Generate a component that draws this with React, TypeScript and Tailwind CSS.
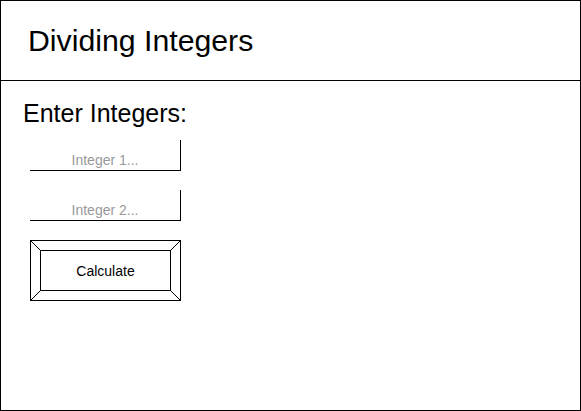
export default function App() {
  const fields = ['Integer 1...', 'Integer 2...']

  return (
    <div
      className="w-[581px] h-[411px] border border-black bg-white flex flex-col"
      style={{ fontFamily: '"Liberation Sans", Arial, sans-serif' }}
    >
      {/* header */}
      <div className="h-[80px] shrink-0 border-b border-black flex items-center pl-[27px]">
        <h1 className="text-[30.25px] leading-[34px] text-black">Dividing Integers</h1>
      </div>

      <div className="flex flex-col pt-[18px] pl-[22px]">
        <h2 className="text-[25px] leading-[28px] text-black">Enter Integers:</h2>

        <div className="flex flex-col gap-[19px] mt-[13px] ml-[7px]">
          {fields.map((f) => (
            <input
              key={f}
              placeholder={f}
              className="w-[151px] h-[31px] border-r border-b border-black pt-[9px] text-center text-[14px] leading-[16px] text-black placeholder:text-[#999999] outline-none bg-transparent"
            />
          ))}
        </div>

        {/* bevelled button */}
        <button className="relative mt-[19px] ml-[7px] w-[151px] h-[61px] border border-black p-[9px] cursor-pointer">
          <div className="w-full h-full border border-black flex items-center justify-center pt-[1px] text-[14px] text-black">
            Calculate
          </div>
          <svg
            className="absolute inset-0 pointer-events-none"
            width="149"
            height="59"
            viewBox="0 0 149 59"
          >
            <g stroke="#000" strokeWidth="1">
              <line x1="0" y1="0" x2="9.5" y2="9.5" />
              <line x1="149" y1="0" x2="139.5" y2="9.5" />
              <line x1="0" y1="59" x2="9.5" y2="49.5" />
              <line x1="149" y1="59" x2="139.5" y2="49.5" />
            </g>
          </svg>
        </button>
      </div>
    </div>
  )
}
